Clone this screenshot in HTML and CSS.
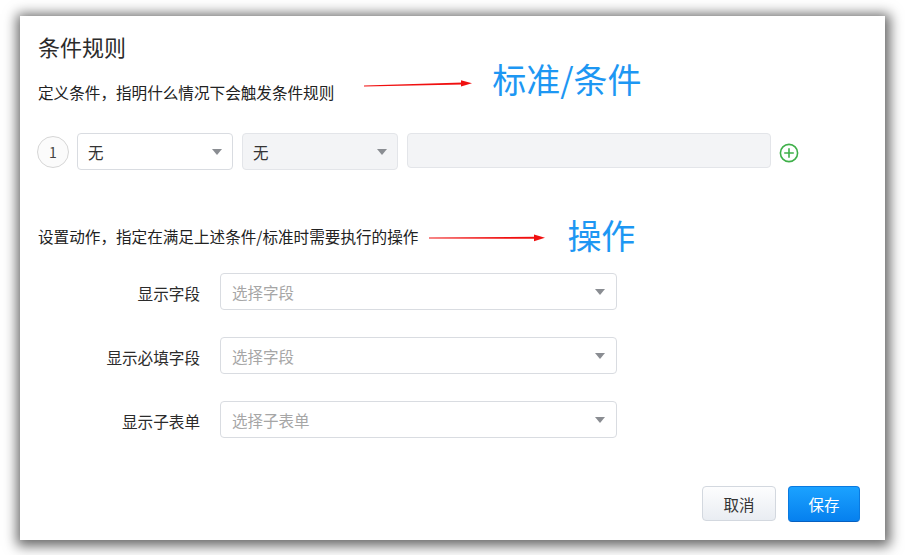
FILE: index.html
```html
<!DOCTYPE html>
<html lang="zh-CN">
<head>
<meta charset="utf-8">
<title>条件规则</title>
<link rel="stylesheet" href="styles.css">
</head>
<body>
<div class="dialog">
  <h2 class="title">条件规则</h2>

  <div class="note-row note-row-1">
    <p class="desc desc-1">定义条件，指明什么情况下会触发条件规则</p>
    <svg class="arrow arrow-1" width="108" height="10" viewBox="0 0 108 10">
      <polygon points="0,6.6 99,3.6 99,5.4 0,7.4" fill="#f01010"/>
      <polygon points="97,1.2 108,4.2 97,7.4" fill="#f01010"/>
    </svg>
    <span class="note note-1">标准/条件</span>
  </div>

  <div class="cond-row">
    <span class="index">1</span>
    <div class="select sel-field"><span class="val">无</span><i class="caret"></i></div>
    <div class="select sel-op is-disabled"><span class="val">无</span><i class="caret"></i></div>
    <div class="value-box"></div>
    <svg class="add" width="20" height="20" viewBox="0 0 20 20">
      <circle cx="10" cy="10" r="8.6" fill="none" stroke="#3fb04a" stroke-width="1.6"/>
      <path d="M10 5.2V14.8M5.2 10H14.8" stroke="#3fb04a" stroke-width="1.6"/>
    </svg>
  </div>

  <div class="note-row note-row-2">
    <p class="desc desc-2">设置动作，指定在满足上述条件/标准时需要执行的操作</p>
    <svg class="arrow arrow-2" width="116" height="10" viewBox="0 0 116 10">
      <polygon points="0,4.4 107,3.8 107,5.8 0,5.4" fill="#f01010"/>
      <polygon points="105,1.4 116,4.8 105,8.2" fill="#f01010"/>
    </svg>
    <span class="note note-2">操作</span>
  </div>

  <div class="form">
    <div class="form-row">
      <label class="label">显示字段</label>
      <div class="select wide"><span class="ph">选择字段</span><i class="caret"></i></div>
    </div>
    <div class="form-row">
      <label class="label">显示必填字段</label>
      <div class="select wide"><span class="ph">选择字段</span><i class="caret"></i></div>
    </div>
    <div class="form-row">
      <label class="label">显示子表单</label>
      <div class="select wide"><span class="ph">选择子表单</span><i class="caret"></i></div>
    </div>
  </div>

  <div class="footer">
    <button class="btn btn-cancel">取消</button>
    <button class="btn btn-save">保存</button>
  </div>
</div>
</body>
</html>
```

FILE: styles.css
```css
html, body {
  margin: 0;
  padding: 0;
  background: #ffffff;
}
body {
  padding: 16px 0 15px 20px;
  font-family: "Noto Sans CJK SC", "Noto Sans", "Liberation Sans", sans-serif;
  color: #333;
}
.dialog {
  box-sizing: border-box;
  width: 865px;
  height: 524px;
  background: #fff;
  box-shadow: 1px 2px 12px 4px rgba(0, 0, 0, 0.6);
  padding: 16px 25px 18px 18px;
  display: flex;
  flex-direction: column;
}
.title {
  margin: 0;
  font-size: 22px;
  line-height: 28px;
  font-weight: 400;
  color: #2b2b2b;
}
.note-row {
  display: flex;
  align-items: flex-start;
}
.note-row-1 {
  margin-top: 2px;
}
.desc {
  margin: 0;
  font-size: 15.6px;
  line-height: 20px;
  color: #222;
  white-space: nowrap;
}
.desc-1 {
  margin-top: 20px;
}
.arrow {
  display: block;
  flex: none;
}
.arrow-1 {
  margin-left: 30px;
  margin-top: 17px;
}
.note {
  font-size: 34px;
  line-height: 34px;
  color: #1d97f3;
  white-space: nowrap;
}
.note-1 {
  margin-left: 20px;
}
.cond-row {
  margin-top: 31px;
  display: flex;
  align-items: center;
  height: 37px;
}
.index {
  box-sizing: border-box;
  width: 32px;
  height: 32px;
  border-radius: 50%;
  border: 1px solid #d6d6d6;
  background: #fbfbfb;
  display: flex;
  align-items: center;
  justify-content: center;
  font-size: 14px;
  color: #444;
  margin-left: -1px;
  margin-right: 8px;
}
.select {
  box-sizing: border-box;
  height: 37px;
  border: 1px solid #d9dce1;
  border-radius: 4px;
  background: #fff;
  display: flex;
  align-items: center;
  justify-content: space-between;
  padding: 0 10px 0 10px;
  font-size: 15.5px;
}
.sel-field {
  width: 156px;
}
.sel-op {
  width: 156px;
  margin-left: 9px;
}
.is-disabled {
  background: #f3f4f6;
  border-color: #e3e5e9;
}
.val {
  color: #333;
}
.caret {
  width: 0;
  height: 0;
  border-left: 5px solid transparent;
  border-right: 5px solid transparent;
  border-top: 6px solid #8a8d92;
}
.value-box {
  box-sizing: border-box;
  width: 364px;
  height: 35px;
  margin-left: 9px;
  margin-top: -2px;
  border: 1px solid #e3e5e9;
  border-radius: 4px;
  background: #f3f4f6;
}
.add {
  display: block;
  margin-left: 8px;
  margin-top: 3px;
}
.note-row-2 {
  margin-top: 48px;
}
.desc-2 {
  margin-top: 8px;
}
.arrow-2 {
  margin-left: 11px;
  margin-top: 15px;
}
.note-2 {
  margin-left: 22px;
}
.form {
  margin-top: 21px;
  display: flex;
  flex-direction: column;
  gap: 27px;
}
.form-row {
  display: flex;
  align-items: center;
}
.label {
  width: 162px;
  text-align: right;
  font-size: 15.6px;
  line-height: 20px;
  color: #2b2b2b;
  margin-right: 20px;
  padding-top: 3px;
}
.wide {
  width: 397px;
  padding: 0 11px 0 11px;
}
.ph {
  color: #a6a6a6;
}
.footer {
  margin-top: auto;
  display: flex;
  justify-content: flex-end;
  align-items: flex-end;
  gap: 12px;
}
.btn {
  box-sizing: border-box;
  height: 35px;
  border-radius: 4px;
  font-family: inherit;
  font-size: 15.5px;
  padding: 0;
  cursor: pointer;
}
.btn-cancel {
  width: 74px;
  color: #333;
  background: linear-gradient(#fdfdfe, #e9edf2);
  border: 1px solid #d3d8df;
  margin-bottom: 1px;
}
.btn-save {
  width: 72px;
  height: 36px;
  color: #fff;
  background: linear-gradient(#1ba2ff, #0680ee);
  border: 1px solid #0a7ae0;
  border-bottom-color: #0660c0;
}
```
